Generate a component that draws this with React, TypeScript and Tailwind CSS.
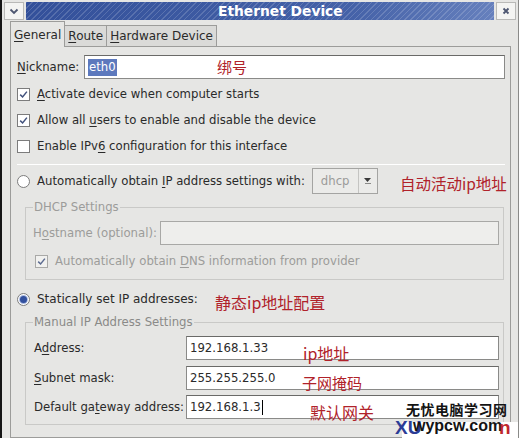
import React from "react";

function U({ children }: { children: React.ReactNode }) {
  return <span className="underline decoration-1 underline-offset-[2px]">{children}</span>;
}

function Check({ disabled }: { disabled?: boolean }) {
  return (
    <span
      className={
        disabled
          ? "flex h-[13px] w-[13px] shrink-0 items-center justify-center border border-[#a9a9a7] bg-[#f1f1ef]"
          : "flex h-[13px] w-[13px] shrink-0 items-center justify-center border border-[#7c7c7c] bg-white"
      }
    >
      <svg width="9" height="9" viewBox="0 0 9 9">
        <path
          d="M1.2 4.6 L3.6 7 L7.9 1.6"
          fill="none"
          stroke={disabled ? "#5d6c91" : "#41517c"}
          strokeWidth="1.5"
        />
      </svg>
    </span>
  );
}

function Box() {
  return <span className="h-[13px] w-[13px] shrink-0 border border-[#7c7c7c] bg-white" />;
}

function Radio({ on }: { on?: boolean }) {
  return (
    <span className="flex h-[13px] w-[13px] shrink-0 items-center justify-center rounded-full border border-[#7c7c7c] bg-white">
      {on && <span className="h-[7px] w-[7px] rounded-full bg-[#32509e] ring-1 ring-[#a9b9e0]" />}
    </span>
  );
}

const ann = "absolute whitespace-nowrap font-['Noto_Sans_CJK_SC',sans-serif] leading-[16px] text-[#b0222a]";
const field = "flex h-[24px] flex-1 items-center border border-[#8a8a88] border-t-[#6a6a68] bg-white pl-[3px] whitespace-nowrap";

export default function App() {
  return (
    <div className="relative flex h-[438px] w-[519px] flex-col overflow-hidden border-l-2 border-r border-l-[#161616] border-r-[#8a8a88] bg-[#e6e6e4] font-['DejaVu_Sans',sans-serif] text-[11.7px] leading-[16px] text-[#2a2a2a]">
      {/* title bar */}
      <div className="flex h-[21px] shrink-0 items-center gap-[2px] px-[2px] pt-[1px]">
        <div className="flex h-[18px] w-[20px] items-center justify-center border border-[#b9b9b7] bg-[#f4f4f2]">
          <svg width="10" height="7" viewBox="0 0 10 7">
            <path d="M1.5 1.5 L5 5 L8.5 1.5" fill="none" stroke="#4d5670" strokeWidth="1.8" />
          </svg>
        </div>
        <div className="flex h-[18px] flex-1 items-center whitespace-nowrap bg-[repeating-linear-gradient(135deg,rgba(255,255,255,0.16)_0px,rgba(255,255,255,0.16)_1px,transparent_1px,transparent_4px),linear-gradient(90deg,#33509a,#4562a8_70%,#6680bd)] pl-[192px] text-[13.8px] font-bold text-white">
          Ethernet Device
        </div>
        <div className="flex h-[18px] w-[20px] items-center justify-center border border-[#b9b9b7] bg-[#f4f4f2]">
          <svg width="8" height="8" viewBox="0 0 8 8">
            <path d="M1.5 1.5 L6.5 6.5 M6.5 1.5 L1.5 6.5" stroke="#4d5670" strokeWidth="1.8" />
          </svg>
        </div>
      </div>

      {/* tabs */}
      <div className="flex h-[25px] shrink-0 items-end pl-[8px] text-[12px]">
        <div className="relative z-10 -mb-px flex h-[26px] items-center border border-b-0 border-[#9c9c9a] bg-[#e6e6e4] px-[3px]">
          <span><U>G</U>eneral</span>
        </div>
        <div className="flex h-[21px] items-center border border-b-0 border-l-0 border-[#9c9c9a] bg-[#dadad8] px-[3px]">
          <span><U>R</U>oute</span>
        </div>
        <div className="flex h-[21px] items-center border border-b-0 border-l-0 border-[#9c9c9a] bg-[#dadad8] px-[3px]">
          <span><U>H</U>ardware Device</span>
        </div>
      </div>

      {/* panel */}
      <div className="ml-[8px] mr-[7px] flex flex-1 flex-col border border-[#9c9c9a] pl-[6px] pr-[5px] pt-[8px]">
        <div className="flex h-[24px] items-center">
          <span className="w-[67px] shrink-0 whitespace-nowrap"><U>N</U>ickname:</span>
          <div className={field}>
            <span className="bg-[#5d79bd] px-px leading-[17px] text-white">eth0</span>
          </div>
        </div>

        <div className="mt-[2px] flex h-[26px] items-center gap-[7px] whitespace-nowrap">
          <Check />
          <span><U>A</U>ctivate device when computer starts</span>
        </div>
        <div className="flex h-[26px] items-center gap-[7px] whitespace-nowrap">
          <Check />
          <span>Allow all <U>u</U>sers to enable and disable the device</span>
        </div>
        <div className="flex h-[26px] items-center gap-[7px] whitespace-nowrap">
          <Box />
          <span>Enable IPv<U>6</U> configuration for this interface</span>
        </div>

        <div className="mt-[5px] h-px border-b border-b-white bg-[#bdbdbb]" />

        <div className="mt-[3px] flex h-[26px] items-center gap-[7px] whitespace-nowrap">
          <Radio />
          <span>Automatically obtain <U>I</U>P address settings with:</span>
          <div className="flex h-[26px] w-[66px] items-center border border-[#a4a4a2] bg-[#ebebe9]">
            <span className="flex-1 pl-[8px] text-[#9b9b99]">dhcp</span>
            <div className="flex h-full w-[19px] flex-col items-center justify-center gap-[1px] border-l border-[#c4c4c2]">
              <svg width="7" height="4" viewBox="0 0 7 4">
                <path d="M0 0 H7 L3.5 4 Z" fill="#3a3a3a" />
              </svg>
              <span className="h-px w-[6px] bg-[#8a8a88]" />
            </div>
          </div>
        </div>

        <fieldset className="mr-[1px] ml-[8px] mt-[5px] border border-[#c9c9c7] pb-[5px] pl-[7px] pr-[4px] text-[#9c9c9a]">
          <legend className="whitespace-nowrap px-px">DHCP Settings</legend>
          <div className="mt-[6px] flex h-[24px] items-center">
            <span className="w-[127px] shrink-0 whitespace-nowrap">H<U>o</U>stname (optional):</span>
            <div className="h-[24px] flex-1 border border-[#a8a8a6] bg-[#eeeeec]" />
          </div>
          <div className="mt-[3px] flex h-[26px] items-center gap-[7px] whitespace-nowrap pl-[2px]">
            <Check disabled />
            <span>Automatically obtain <U>D</U>NS information from provider</span>
          </div>
        </fieldset>

        <div className="mt-[6px] flex h-[26px] items-center gap-[7px] whitespace-nowrap">
          <Radio on />
          <span className="text-[12px]">Statically set IP addresses:</span>
        </div>

        <fieldset className="mr-[1px] ml-[8px] mt-[2px] border border-[#c9c9c7] pb-[5px] pl-[8px] pr-[4px]">
          <legend className="-ml-px whitespace-nowrap px-px text-[#8a8a88]">Manual IP Address Settings</legend>
          <div className="mt-[6px] flex h-[24px] items-center">
            <span className="w-[152px] shrink-0 whitespace-nowrap">A<U>d</U>dress:</span>
            <div className={field}>192.168.1.33</div>
          </div>
          <div className="mt-[6px] flex h-[24px] items-center">
            <span className="w-[152px] shrink-0 whitespace-nowrap"><U>S</U>ubnet mask:</span>
            <div className={field}>255.255.255.0</div>
          </div>
          <div className="mt-[5px] flex h-[24px] items-center">
            <span className="w-[152px] shrink-0 whitespace-nowrap">Default ga<U>t</U>eway address:</span>
            <div className={field}>
              192.168.1.3<span className="ml-px h-[15px] w-px bg-black" />
            </div>
          </div>
        </fieldset>
      </div>

      {/* annotations */}
      <span className={ann + " left-[215px] top-[59px] text-[15px]"}>绑号</span>
      <span className={ann + " left-[398px] top-[175px] text-[15.5px]"}>自动活动ip地址</span>
      <span className={ann + " left-[213px] top-[294px] text-[16px]"}>静态ip地址配置</span>
      <span className={ann + " left-[301px] top-[345px] text-[16px]"}>ip地址</span>
      <span className={ann + " left-[300px] top-[375px] text-[15px]"}>子网掩码</span>
      <span className={ann + " left-[308px] top-[404px] text-[16px]"}>默认网关</span>

      {/* watermark */}
      <div className="absolute left-[400px] top-[422px] h-[16px] w-[120px] bg-white" />
      <span className="absolute left-[404px] top-[401px] whitespace-nowrap font-['Noto_Sans_CJK_SC',sans-serif] text-[14px] font-bold leading-[16px] tracking-[0.5px] text-[#141414]">无忧电脑学习网</span>
      <span className="absolute left-[393px] top-[419px] whitespace-nowrap font-['Liberation_Sans',sans-serif] text-[19px] font-bold leading-[18px] text-[#2b3c96]">XU</span>
      <span className="absolute left-[411px] top-[417px] whitespace-nowrap font-['Liberation_Sans',sans-serif] text-[16px] font-bold leading-[18px] text-[#141414]">wypcw.com</span>
      <span className="absolute left-[497px] top-[419px] whitespace-nowrap font-['Liberation_Sans',sans-serif] text-[19px] font-bold leading-[18px] text-[#c0282e]">n</span>
    </div>
  );
}
